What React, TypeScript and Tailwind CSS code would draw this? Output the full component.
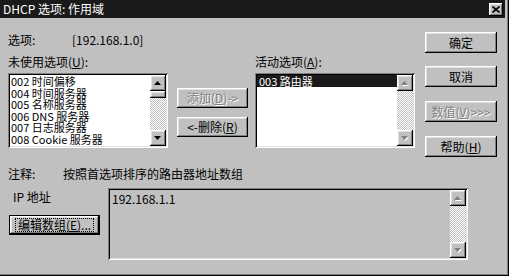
import type { ReactNode } from "react";
import clsx from "clsx";

const raised =
  "bg-[#c0c0c0] shadow-[inset_-1px_-1px_#000,inset_1px_1px_#fff,inset_-2px_-2px_#808080,inset_2px_2px_#dfdfdf]";
const sunken =
  "shadow-[inset_1px_1px_#808080,inset_-1px_-1px_#fff,inset_2px_2px_#000,inset_-2px_-2px_#dfdfdf]";
const checker =
  "bg-[repeating-conic-gradient(#c0c0c0_0_25%,#ffffff_0_50%)] bg-size-[2px_2px]";

function Btn({
  children,
  disabled,
  className,
}: {
  children: ReactNode;
  disabled?: boolean;
  className?: string;
}) {
  return (
    <div
      className={clsx(
        "flex items-center justify-center text-[12px] leading-[14px] whitespace-nowrap",
        raised,
        disabled ? "text-[#808080] [text-shadow:1px_1px_0_#fff]" : "text-black",
        className
      )}
    >
      {children}
    </div>
  );
}

function Arrow({ up, disabled }: { up?: boolean; disabled?: boolean }) {
  const pts = up ? "3.5,0 7,4 0,4" : "0,0 7,0 3.5,4";
  return (
    <div className={clsx("w-[16px] h-[16px] flex items-center justify-center", raised)}>
      <svg width="8" height="5" viewBox="0 0 8 5">
        {disabled && <polygon points={pts} fill="#fff" transform="translate(1,1)" />}
        <polygon points={pts} fill={disabled ? "#808080" : "#000"} />
      </svg>
    </div>
  );
}

function ScrollBar({ disabled, thumb }: { disabled?: boolean; thumb?: boolean }) {
  return (
    <div className="w-[16px] h-full flex flex-col shrink-0">
      <Arrow up disabled={disabled} />
      <div className={clsx("flex-1 flex flex-col", checker)}>
        {thumb && <div className={clsx("h-[7px] w-full", raised)} />}
      </div>
      <Arrow disabled={disabled} />
    </div>
  );
}

const unused = ["002 时间偏移", "004 时间服务器", "005 名称服务器", "006 DNS 服务器", "007 日志服务器", "008 Cookie 服务器"];

export default function App() {
  return (
    <div className="w-[509px] h-[276px] bg-[#c0c0c0] shadow-[inset_-1px_-1px_#000,inset_-2px_-2px_#808080] font-['Noto_Sans_CJK_SC',sans-serif] text-[12px] leading-[14px] text-black overflow-hidden">
      {/* Title bar */}
      <div className="w-[505px] h-[18px] bg-[#1a1a1a] flex items-center justify-between pl-[3px] pr-[2px]">
        <span className="text-white text-[12px] leading-[14px]">DHCP 选项: 作用域</span>
        <div className={clsx("w-[14px] h-[13px] flex items-center justify-center", raised)}>
          <svg width="8" height="7" viewBox="0 0 8 7">
            <path d="M0.5 0.5 L7.5 6.5 M7.5 0.5 L0.5 6.5" stroke="#000" strokeWidth="1.6" />
          </svg>
        </div>
      </div>

      <div className="pl-[8px]">
        <div className="flex">
          {/* Left main */}
          <div className="w-[407px] pt-[15px]">
            <div className="flex">
              <span className="w-[64px]">选项:</span>
              <span>[192.168.1.0]</span>
            </div>
            <div className="flex mt-[8px]">
              <div className="w-[160px]">
                <div>
                  未使用选项(<u>U</u>):
                </div>
                <div className={clsx("mt-[4px] h-[75px] bg-white p-[2px] flex", sunken)}>
                  <div className="flex-1 pl-[1px] pt-[1px]">
                    {unused.map((t) => (
                      <div key={t} className="text-[11px] leading-[11.6px] whitespace-nowrap">
                        {t}
                      </div>
                    ))}
                  </div>
                  <ScrollBar thumb />
                </div>
              </div>
              <div className="w-[71px] ml-[9px] pt-[33px] flex flex-col gap-[9px]">
                <Btn disabled className="h-[20px]">
                  添加(<u>D</u>)-&gt;
                </Btn>
                <Btn className="h-[20px]">
                  &lt;-删除(<u>R</u>)
                </Btn>
              </div>
              <div className="w-[160px] ml-[7px]">
                <div>
                  活动选项(<u>A</u>):
                </div>
                <div className={clsx("mt-[4px] h-[75px] bg-white p-[2px] flex", sunken)}>
                  <div className="flex-1">
                    <div className="text-[11px] leading-[12px] bg-[#1a1a1a] text-white pl-[2px] whitespace-nowrap">
                      003 路由器
                    </div>
                  </div>
                  <ScrollBar disabled />
                </div>
              </div>
            </div>
          </div>

          {/* Right buttons */}
          <div className="ml-[10px] pt-[14px] flex flex-col w-[72px]">
            <Btn className="h-[21px]">确定</Btn>
            <Btn className="h-[21px] mt-[13px]">取消</Btn>
            <Btn disabled className="h-[21px] mt-[14px]">
              数值(<u>V</u>)&gt;&gt;&gt;
            </Btn>
            <Btn className="h-[21px] mt-[14px]">
              帮助(<u>H</u>)
            </Btn>
          </div>
        </div>

        {/* Comment */}
        <div className="flex mt-[10px]">
          <span className="w-[55px]">注释:</span>
          <span>按照首选项排序的路由器地址数组</span>
        </div>

        {/* Value editor */}
        <div className="flex mt-[7px]">
          <div className="w-[100px] pt-[2px]">
            <div className="pl-[5px]">IP 地址</div>
            <div className="mt-[11px] ml-[1px] w-[91px] h-[20px] bg-black p-[1px]">
              <Btn className="h-full">
                <span className="border border-dotted border-black px-[2px] leading-[12px]">
                  编辑数组(<u>E</u>)...
                </span>
              </Btn>
            </div>
          </div>
          <div className={clsx("w-[360px] h-[72px] bg-[#c0c0c0] p-[2px] flex", sunken)}>
            <div className="flex-1 pl-[2px] pt-[2px]">192.168.1.1</div>
            <ScrollBar disabled />
          </div>
        </div>
      </div>
    </div>
  );
}
